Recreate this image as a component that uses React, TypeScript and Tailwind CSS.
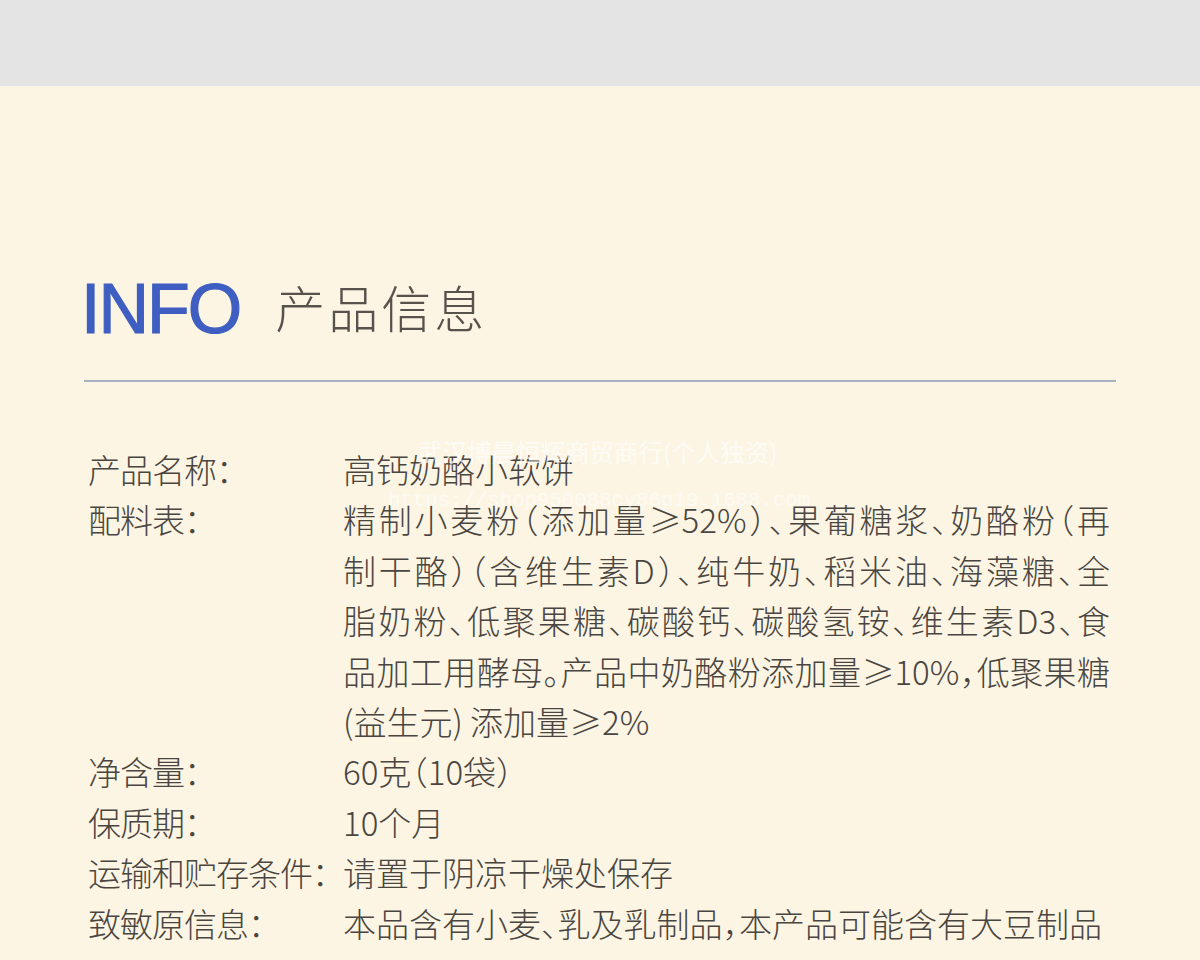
const rows: { label: string; lines: string[] }[] = [
  { label: "产品名称：", lines: ["高钙奶酪小软饼"] },
  {
    label: "配料表：",
    lines: [
      "精制小麦粉（添加量≥52%）、果葡糖浆、奶酪粉（再",
      "制干酪）（含维生素D）、纯牛奶、稻米油、海藻糖、全",
      "脂奶粉、低聚果糖、碳酸钙、碳酸氢铵、维生素D3、食",
      "品加工用酵母。产品中奶酪粉添加量≥10%，低聚果糖",
      "(益生元) 添加量≥2%",
    ],
  },
  { label: "净含量：", lines: ["60克（10袋）"] },
  { label: "保质期：", lines: ["10个月"] },
  { label: "运输和贮存条件：", lines: ["请置于阴凉干燥处保存"] },
  { label: "致敏原信息：", lines: ["本品含有小麦、乳及乳制品，本产品可能含有大豆制品"] },
];

export default function App() {
  return (
    <div className="w-[1200px] h-[960px] overflow-hidden bg-[#fcf5e4] font-['Noto_Sans_CJK_SC',sans-serif]">
      <div className="h-[86px] bg-[#e4e4e4]" />
      <div className="relative px-[84px] pt-[188px]">
        <div className="flex items-start gap-[35px]">
          <span className="font-['Liberation_Sans',sans-serif] text-[70px] leading-none text-[#3f5ec1] tracking-[-2px] [-webkit-text-stroke:1.2px_#3f5ec1] -ml-[3px]">
            INFO
          </span>
          <span className="text-[50px] leading-none text-[#57524c] tracking-[3px] font-light mt-[7px]">产品信息</span>
        </div>
        <div className="mt-[36px] h-[2px] bg-[#aab0c4]" />
        <div className="mt-[62px] pl-[4px] text-[#4a4540] text-[33px] leading-[50.4px] font-light">
          {rows.map((r) => (
            <div key={r.label} className="flex">
              <div className="w-[255px] shrink-0 whitespace-nowrap tracking-[-1px]">{r.label}</div>
              <div className="w-[767px] [font-feature-settings:'halt']">
                {r.lines.map((l, i) => (
                  <div
                    key={l}
                    className={
                      r.lines.length > 1 && i < r.lines.length - 1
                        ? "whitespace-nowrap text-justify [text-align-last:justify]"
                        : "whitespace-nowrap"
                    }
                  >
                    {l}
                  </div>
                ))}
              </div>
            </div>
          ))}
        </div>
        <div className="absolute left-[418px] top-[354px] text-[24.5px] leading-none text-white/70 whitespace-nowrap">
          武汉博晨恒辉商贸商行(个人独资)
        </div>
        <div className="absolute left-[388px] top-[405px] font-['Liberation_Mono',monospace] text-[20.7px] leading-none text-white/60 whitespace-nowrap">
          https://shop950088cy86p19.1688.com
        </div>
      </div>
    </div>
  );
}
